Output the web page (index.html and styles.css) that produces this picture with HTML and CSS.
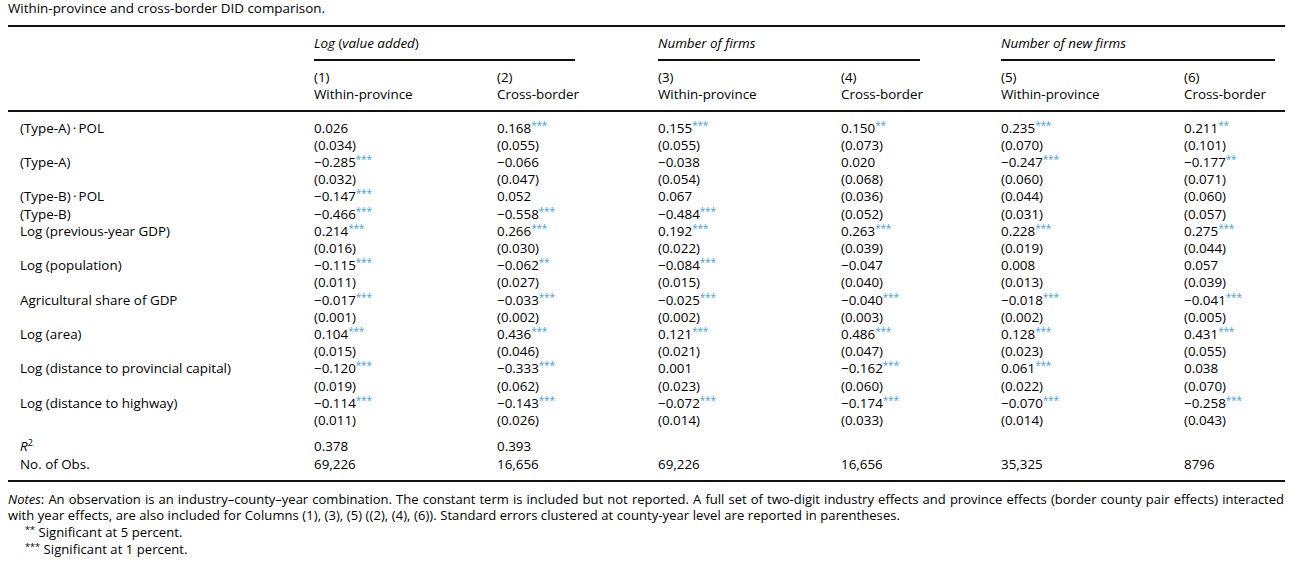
FILE: index.html
```html
<!DOCTYPE html>
<html lang="en">
<head>
<meta charset="utf-8">
<title>Within-province and cross-border DID comparison</title>
<link rel="stylesheet" href="styles.css">
</head>
<body>
<div class="page">
  <p class="caption">Within-province and cross-border DID comparison.</p>
  <table class="did">
    <colgroup>
      <col class="c0"><col class="c1"><col class="c2"><col class="c3"><col class="c4"><col class="c5"><col class="c6">
    </colgroup>
    <thead>
      <tr class="grp">
        <th></th>
        <th colspan="2"><span class="gl g1"><i>Log</i> (<i>value added</i>)</span></th>
        <th colspan="2"><span class="gl g2"><i>Number of firms</i></span></th>
        <th colspan="2"><span class="gl g3"><i>Number of new firms</i></span></th>
      </tr>
      <tr class="num">
        <th></th>
        <th>(1)<br>Within-province</th>
        <th>(2)<br>Cross-border</th>
        <th>(3)<br>Within-province</th>
        <th>(4)<br>Cross-border</th>
        <th>(5)<br>Within-province</th>
        <th>(6)<br>Cross-border</th>
      </tr>
    </thead>
    <tbody>
      <tr class="first"><td class="lab">(Type-A)&thinsp;·&thinsp;POL</td><td>0.026</td><td>0.168<sup class="s">***</sup></td><td>0.155<sup class="s">***</sup></td><td>0.150<sup class="s">**</sup></td><td>0.235<sup class="s">***</sup></td><td>0.211<sup class="s">**</sup></td></tr>
      <tr><td class="lab"></td><td>(0.034)</td><td>(0.055)</td><td>(0.055)</td><td>(0.073)</td><td>(0.070)</td><td>(0.101)</td></tr>
      <tr><td class="lab">(Type-A)</td><td>−0.285<sup class="s">***</sup></td><td>−0.066</td><td>−0.038</td><td>0.020</td><td>−0.247<sup class="s">***</sup></td><td>−0.177<sup class="s">**</sup></td></tr>
      <tr><td class="lab"></td><td>(0.032)</td><td>(0.047)</td><td>(0.054)</td><td>(0.068)</td><td>(0.060)</td><td>(0.071)</td></tr>
      <tr><td class="lab">(Type-B)&thinsp;·&thinsp;POL</td><td>−0.147<sup class="s">***</sup></td><td>0.052</td><td>0.067</td><td>(0.036)</td><td>(0.044)</td><td>(0.060)</td></tr>
      <tr><td class="lab">(Type-B)</td><td>−0.466<sup class="s">***</sup></td><td>−0.558<sup class="s">***</sup></td><td>−0.484<sup class="s">***</sup></td><td>(0.052)</td><td>(0.031)</td><td>(0.057)</td></tr>
      <tr><td class="lab">Log (previous-year GDP)</td><td>0.214<sup class="s">***</sup></td><td>0.266<sup class="s">***</sup></td><td>0.192<sup class="s">***</sup></td><td>0.263<sup class="s">***</sup></td><td>0.228<sup class="s">***</sup></td><td>0.275<sup class="s">***</sup></td></tr>
      <tr><td class="lab"></td><td>(0.016)</td><td>(0.030)</td><td>(0.022)</td><td>(0.039)</td><td>(0.019)</td><td>(0.044)</td></tr>
      <tr><td class="lab">Log (population)</td><td>−0.115<sup class="s">***</sup></td><td>−0.062<sup class="s">**</sup></td><td>−0.084<sup class="s">***</sup></td><td>−0.047</td><td>0.008</td><td>0.057</td></tr>
      <tr><td class="lab"></td><td>(0.011)</td><td>(0.027)</td><td>(0.015)</td><td>(0.040)</td><td>(0.013)</td><td>(0.039)</td></tr>
      <tr><td class="lab">Agricultural share of GDP</td><td>−0.017<sup class="s">***</sup></td><td>−0.033<sup class="s">***</sup></td><td>−0.025<sup class="s">***</sup></td><td>−0.040<sup class="s">***</sup></td><td>−0.018<sup class="s">***</sup></td><td>−0.041<sup class="s">***</sup></td></tr>
      <tr><td class="lab"></td><td>(0.001)</td><td>(0.002)</td><td>(0.002)</td><td>(0.003)</td><td>(0.002)</td><td>(0.005)</td></tr>
      <tr><td class="lab">Log (area)</td><td>0.104<sup class="s">***</sup></td><td>0.436<sup class="s">***</sup></td><td>0.121<sup class="s">***</sup></td><td>0.486<sup class="s">***</sup></td><td>0.128<sup class="s">***</sup></td><td>0.431<sup class="s">***</sup></td></tr>
      <tr><td class="lab"></td><td>(0.015)</td><td>(0.046)</td><td>(0.021)</td><td>(0.047)</td><td>(0.023)</td><td>(0.055)</td></tr>
      <tr><td class="lab">Log (distance to provincial capital)</td><td>−0.120<sup class="s">***</sup></td><td>−0.333<sup class="s">***</sup></td><td>0.001</td><td>−0.162<sup class="s">***</sup></td><td>0.061<sup class="s">***</sup></td><td>0.038</td></tr>
      <tr><td class="lab"></td><td>(0.019)</td><td>(0.062)</td><td>(0.023)</td><td>(0.060)</td><td>(0.022)</td><td>(0.070)</td></tr>
      <tr><td class="lab">Log (distance to highway)</td><td>−0.114<sup class="s">***</sup></td><td>−0.143<sup class="s">***</sup></td><td>−0.072<sup class="s">***</sup></td><td>−0.174<sup class="s">***</sup></td><td>−0.070<sup class="s">***</sup></td><td>−0.258<sup class="s">***</sup></td></tr>
      <tr><td class="lab"></td><td>(0.011)</td><td>(0.026)</td><td>(0.014)</td><td>(0.033)</td><td>(0.014)</td><td>(0.043)</td></tr>
      <tr class="r2"><td class="lab"><i>R</i><sup class="sq">2</sup></td><td>0.378</td><td>0.393</td><td></td><td></td><td></td><td></td></tr>
      <tr class="last"><td class="lab">No. of Obs.</td><td>69,226</td><td>16,656</td><td>69,226</td><td>16,656</td><td>35,325</td><td>8796</td></tr>
    </tbody>
  </table>
  <div class="notes">
    <p class="n1"><i>Notes</i>: An observation is an industry–county–year combination. The constant term is included but not reported. A full set of two-digit industry effects and province effects (border county pair effects) interacted</p>
    <p class="n2">with year effects, are also included for Columns (1), (3), (5) ((2), (4), (6)). Standard errors clustered at county-year level are reported in parentheses.</p>
    <p class="fn"><sup class="fs">**</sup> Significant at 5 percent.</p>
    <p class="fn"><sup class="fs">***</sup> Significant at 1 percent.</p>
  </div>
</div>
</body>
</html>
```
FILE: styles.css
```css
html, body {
  margin: 0;
  padding: 0;
  background: #fff;
}
body {
  font-family: "Open Sans", "Noto Sans", sans-serif;
  font-size: 13.4px;
  color: #000;
}
.page {
  padding: 0 0 0 8px;
  width: 1277px;
}
.caption {
  margin: 0;
  line-height: 16px;
  height: 16px;
}
.did {
  margin-top: 9px;
  width: 1277px;
  table-layout: fixed;
  border-collapse: collapse;
  border-top: 2px solid #111;
  border-bottom: 2px solid #111;
}
.c0 { width: 306px; }
.c1 { width: 183px; }
.c2 { width: 161px; }
.c3 { width: 183px; }
.c4 { width: 160px; }
.c5 { width: 183px; }
.c6 { width: 101px; }
.did th, .did td {
  padding: 0;
  text-align: left;
  font-weight: normal;
  vertical-align: top;
  white-space: nowrap;
  line-height: 17.2px;
}
.did th { line-height: 17px; }
.grp th { padding-top: 7.5px; }
.gl {
  display: block;
  padding-bottom: 7.5px;
  border-bottom: 2px solid #111;
}
.g1 { width: 261px; }
.g2 { width: 262px; }
.g3 { width: 274px; }
.num th {
  padding-top: 7.5px;
  padding-bottom: 7.5px;
  border-bottom: 2px solid #111;
}
.did td.lab { padding-left: 12px; }
.first td { padding-top: 7.5px; }
.r2 td { padding-top: 7.4px; line-height: 18px; }
.last td { line-height: 18px; padding-bottom: 7.5px; }
.s {
  color: #3f9fdc;
  font-size: 10px;
  line-height: 0;
  vertical-align: 4px;
  letter-spacing: -0.2px;
}
.sq {
  font-size: 9px;
  line-height: 0;
  vertical-align: 5px;
}
.notes {
  padding-top: 8.6px;
  width: 1276px;
  font-size: 13px;
}
.notes p {
  margin: 0;
  line-height: 16.7px;
}
.n1 {
  text-align: justify;
  text-align-last: justify;
}
.n2, .fn { letter-spacing: 0.08px; }
.fn { padding-left: 17px; }
.fs {
  font-size: 9px;
  line-height: 0;
  vertical-align: 4px;
}
```
